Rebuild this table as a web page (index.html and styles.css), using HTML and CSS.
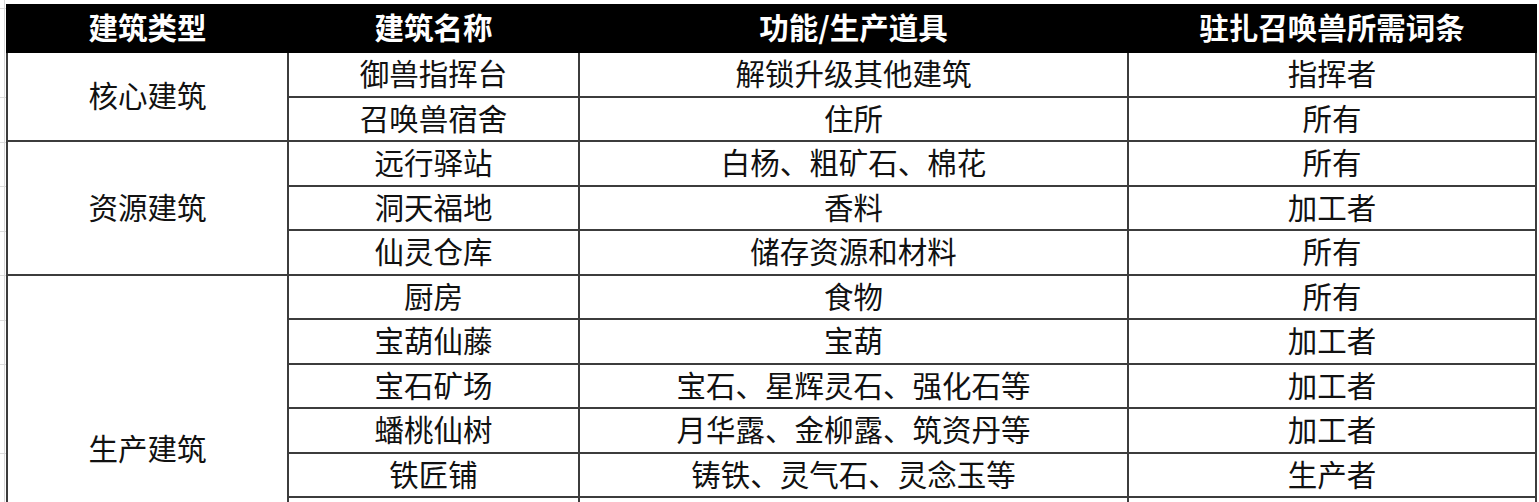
FILE: index.html
```html
<!DOCTYPE html>
<html lang="zh">
<head>
<meta charset="utf-8">
<link rel="stylesheet" href="styles.css">
</head>
<body>
<div class="sheet">
<table class="grid">
  <colgroup>
    <col class="c1"><col class="c2"><col class="c3"><col class="c4">
  </colgroup>
  <thead>
    <tr class="head">
      <th>建筑类型</th><th>建筑名称</th><th>功能/生产道具</th><th>驻扎召唤兽所需词条</th>
    </tr>
  </thead>
  <tbody>
    <tr><td rowspan="2">核心建筑</td><td>御兽指挥台</td><td>解锁升级其他建筑</td><td>指挥者</td></tr>
    <tr><td>召唤兽宿舍</td><td>住所</td><td>所有</td></tr>
    <tr><td rowspan="3">资源建筑</td><td>远行驿站</td><td>白杨、粗矿石、棉花</td><td>所有</td></tr>
    <tr><td>洞天福地</td><td>香料</td><td>加工者</td></tr>
    <tr><td>仙灵仓库</td><td>储存资源和材料</td><td>所有</td></tr>
    <tr><td rowspan="8" class="tall">生产建筑</td><td>厨房</td><td>食物</td><td>所有</td></tr>
    <tr><td>宝葫仙藤</td><td>宝葫</td><td>加工者</td></tr>
    <tr><td>宝石矿场</td><td>宝石、星辉灵石、强化石等</td><td>加工者</td></tr>
    <tr><td>蟠桃仙树</td><td>月华露、金柳露、筑资丹等</td><td>加工者</td></tr>
    <tr><td>铁匠铺</td><td>铸铁、灵气石、灵念玉等</td><td>生产者</td></tr>
    <tr><td>裁缝铺</td><td>布料、蚕丝线、灵丝锦等</td><td>生产者</td></tr>
    <tr class="off"><td>炼丹房</td><td>丹药、灵丹等</td><td>生产者</td></tr>
    <tr class="off"><td>藏宝阁</td><td>宝物</td><td>所有</td></tr>
  </tbody>
</table>
</div>
</body>
</html>
```
FILE: styles.css
```css
html, body {
  margin: 0;
  padding: 0;
  background: #ffffff;
  overflow: hidden;
  height: 502px;
}
.sheet {
  padding: 4px 0 0 6px;
  height: 498px;
  overflow: hidden;
  background-image:
    linear-gradient(to right, #d8d8d8 0 1px, transparent 1px),
    repeating-linear-gradient(to bottom, transparent 0 8px, #dcdcdc 8px 9px, transparent 9px 44.5px);
  background-size: 6px 100%, 6px 100%;
  background-repeat: no-repeat, no-repeat;
  background-position: 4px 0, 0 0;
}
.grid {
  border-collapse: collapse;
  table-layout: fixed;
  width: 1529px;
  font-family: "Microsoft YaHei", "Noto Sans CJK SC", "Noto Sans", sans-serif;
  font-size: 29.5px;
  color: #111;
}
.c1 { width: 281px; }
.c2 { width: 291px; }
.c3 { width: 549px; }
.c4 { width: 408px; }
.grid th, .grid td {
  border: 2px solid #3c3c3c;
  text-align: center;
  vertical-align: middle;
  padding: 0;
  line-height: 1;
  white-space: nowrap;
  overflow: hidden;
}
.head th {
  background: #000;
  color: #fff;
  font-weight: 700;
  height: 42px;
  padding-bottom: 3px;
  border-color: #000;
}
.grid td {
  height: 39.5px;
  padding-bottom: 3px;
}
.grid td.tall {
  padding-bottom: 10px;
}
.off td {
  color: transparent;
}
```
